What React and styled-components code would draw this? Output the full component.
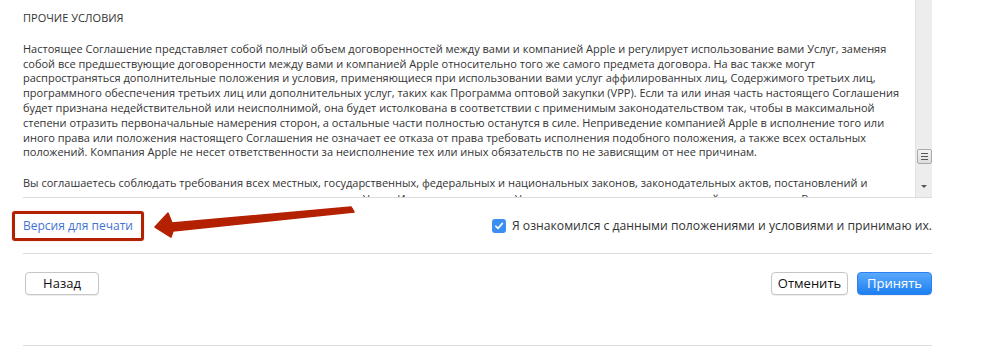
import React from 'react';
import styled, { createGlobalStyle } from 'styled-components';

const GlobalStyle = createGlobalStyle`
  html, body {
    margin: 0;
    padding: 0;
    background: #ffffff;
    overflow: hidden;
  }
  body {
    font-family: "Open Sans", "Liberation Sans", sans-serif;
    color: #333333;
  }
`;

const Page = styled.div`
  position: relative;
  width: 909px;
  margin-left: 23px;
  height: 354px;
`;

const TermsBox = styled.div`
  display: flex;
  height: 197px;
  border-bottom: 1px solid #dcdcdc;
  overflow: hidden;
`;

const TermsText = styled.div`
  flex: 1;
  padding-top: 11px;
  font-size: 11px;
  line-height: 14.8px;
  color: #333333;
  white-space: nowrap;
  overflow: hidden;
`;

const Heading = styled.div`
  margin-bottom: 16px;
`;

const Para = styled.div`
  margin-bottom: 16px;
`;

const Line = styled.div`
  margin-top: ${p => (p.$shift ? '1.5px' : '0')};
`;

const Scrollbar = styled.div`
  width: 16px;
  background: #ededed;
  border-left: 1px solid #e2e2e2;
  display: flex;
  flex-direction: column;
  justify-content: flex-end;
  align-items: center;
`;

const Thumb = styled.div`
  width: 13px;
  height: 13px;
  border: 1px solid #a9a9a9;
  border-radius: 2px;
  background: linear-gradient(#f4f4f4, #dcdcdc);
  display: flex;
  flex-direction: column;
  justify-content: center;
  align-items: center;
  gap: 2px;
  margin-bottom: 21px;
`;

const Grip = styled.span`
  display: block;
  width: 7px;
  height: 1px;
  background: #555;
`;

const DownArrow = styled.div`
  width: 0;
  height: 0;
  border-left: 3px solid transparent;
  border-right: 3px solid transparent;
  border-top: 3px solid #555;
  margin-bottom: 9px;
`;

const AgreeRow = styled.div`
  display: flex;
  align-items: center;
  justify-content: space-between;
  height: 55px;
  border-bottom: 1px solid #dcdcdc;
`;

const Marked = styled.div`
  margin-left: -11px;
  border: 3px solid #b42100;
  border-radius: 3px;
  padding: 0 8px;
  height: 24px;
  display: flex;
  align-items: center;
  box-shadow: 0 0 1px rgba(180, 33, 0, 0.6);
`;

const PrintLink = styled.a`
  font-size: 12px;
  color: #3f73d3;
  text-decoration: none;
  cursor: pointer;
`;

const CheckLabel = styled.label`
  display: flex;
  align-items: center;
  gap: 6px;
  font-size: 12.2px;
  color: #333333;
`;

const CheckBox = styled.span`
  width: 14px;
  height: 14px;
  border-radius: 3px;
  background: #3c8ff2;
  display: flex;
  align-items: center;
  justify-content: center;
`;

const ButtonRow = styled.div`
  display: flex;
  align-items: flex-start;
  gap: 9px;
  height: 92px;
  padding: 18px 0 0 2px;
  box-sizing: border-box;
  border-bottom: 1px solid #dcdcdc;
`;

const Spacer = styled.div`
  flex: 1;
`;

const Button = styled.button`
  height: 23px;
  width: ${p => p.$w}px;
  padding: 0;
  border-radius: 4px;
  font-family: "Open Sans", "Liberation Sans", sans-serif;
  font-size: 13px;
  line-height: 21px;
  cursor: pointer;
  border: 1px solid ${p => (p.$primary ? '#2a80ec' : '#c6c6c6')};
  color: ${p => (p.$primary ? '#ffffff' : '#111111')};
  background: ${p =>
    p.$primary ? 'linear-gradient(#5aa9fb, #1c7ff1)' : '#ffffff'};
  box-shadow: 0 1px 1px rgba(0, 0, 0, 0.08);
`;

const ArrowLayer = styled.svg`
  position: absolute;
  left: -23px;
  top: 0;
  pointer-events: none;
`;

const lines = [
  'Настоящее Соглашение представляет собой полный объем договоренностей между вами и компанией Apple и регулирует использование вами Услуг, заменяя',
  'собой все предшествующие договоренности между вами и компанией Apple относительно того же самого предмета договора. На вас также могут',
  'распространяться дополнительные положения и условия, применяющиеся при использовании вами услуг аффилированных лиц, Содержимого третьих лиц,',
  'программного обеспечения третьих лиц или дополнительных услуг, таких как Программа оптовой закупки (VPP). Если та или иная часть настоящего Соглашения',
  'будет признана недействительной или неисполнимой, она будет истолкована в соответствии с применимым законодательством так, чтобы в максимальной',
  'степени отразить первоначальные намерения сторон, а остальные части полностью останутся в силе. Неприведение компанией Apple в исполнение того или',
  'иного права или положения настоящего Соглашения не означает ее отказа от права требовать исполнения подобного положения, а также всех остальных',
  'положений. Компания Apple не несет ответственности за неисполнение тех или иных обязательств по не зависящим от нее причинам.',
];

const lines2 = [
  'Вы соглашаетесь соблюдать требования всех местных, государственных, федеральных и национальных законов, законодательных актов, постановлений и',
  'законов и нормативных актов, относящихся к использованию Услуг. Использование вами Услуг может также подпадать под действие законов. В частности',
];

export default function App() {
  return (
    <>
      <GlobalStyle />
      <Page>
        <TermsBox>
          <TermsText>
            <Heading>ПРОЧИЕ УСЛОВИЯ</Heading>
            <Para>
              {lines.map(l => (
                <Line key={l}>{l}</Line>
              ))}
            </Para>
            <Para>
              {lines2.map((l, i) => (
                <Line key={l} $shift={i === 1}>{l}</Line>
              ))}
            </Para>
          </TermsText>
          <Scrollbar>
            <Thumb>
              <Grip />
              <Grip />
              <Grip />
            </Thumb>
            <DownArrow />
          </Scrollbar>
        </TermsBox>

        <AgreeRow>
          <Marked>
            <PrintLink>Версия для печати</PrintLink>
          </Marked>
          <CheckLabel>
            <CheckBox>
              <svg width="10" height="10" viewBox="0 0 10 10">
                <path d="M1.8 5.2 L4 7.4 L8.4 2.4" fill="none" stroke="#fff" strokeWidth="1.6" strokeLinecap="round" strokeLinejoin="round" />
              </svg>
            </CheckBox>
            Я ознакомился с данными положениями и условиями и принимаю их.
          </CheckLabel>
        </AgreeRow>

        <ButtonRow>
          <Button $w={74}>Назад</Button>
          <Spacer />
          <Button $w={77}>Отменить</Button>
          <Button $w={75} $primary>Принять</Button>
        </ButtonRow>

        <ArrowLayer width="400" height="260" viewBox="0 0 400 260">
          <polygon
            points="351,207 354,212 173,231 171,237 155,227 168,213 172,223"
            fill="#b42100"
            stroke="#b42100"
            strokeWidth="1.5"
            strokeLinejoin="round"
          />
        </ArrowLayer>
      </Page>
    </>
  );
}
